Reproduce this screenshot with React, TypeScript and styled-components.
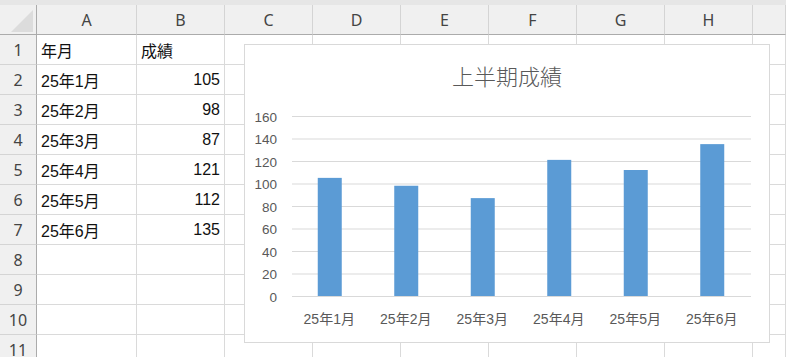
import React from 'react'
import styled, { createGlobalStyle } from 'styled-components'

const GlobalStyle = createGlobalStyle`
  html, body {
    margin: 0;
    padding: 0;
    background: #fff;
    overflow: hidden;
  }
  body {
    font-family: "Liberation Sans", "Noto Sans CJK JP", sans-serif;
  }
`

// the last column is cut off by the window, its letter isn't visible
const COLUMNS = ['A', 'B', 'C', 'D', 'E', 'F', 'G', 'H', '']
const ROW_COUNT = 11

const data: [string, number][] = [
  ['25年1月', 105],
  ['25年2月', 98],
  ['25年3月', 87],
  ['25年4月', 121],
  ['25年5月', 112],
  ['25年6月', 135],
]

const Workbook = styled.div`
  position: relative;
  width: 786px;
  height: 357px;
  overflow: hidden;
  background: #fff;
`

const TopStrip = styled.div`
  height: 5px;
  background: #e6e6e6;
`

const Grid = styled.div`
  display: grid;
  grid-template-columns: 37px 100px repeat(7, 88px) 1fr;
  grid-auto-rows: 30px;
`

const Corner = styled.div`
  box-sizing: border-box;
  background: #f0f0f0;
  border-right: 1px solid #ababab;
  border-bottom: 1px solid #ababab;
  display: flex;
  justify-content: flex-end;
  align-items: flex-end;
  padding: 0 3px 2px 0;
`

const CornerTriangle = styled.div`
  width: 22px;
  height: 22px;
  background: #dcdcdc;
  clip-path: polygon(100% 0, 100% 100%, 0 100%);
`

const ColHeader = styled.div`
  box-sizing: border-box;
  background: #f0f0f0;
  border-right: 1px solid #d4d4d4;
  border-bottom: 1px solid #ababab;
  display: flex;
  align-items: center;
  justify-content: center;
  font-family: "Noto Sans", "Liberation Sans", sans-serif;
  font-size: 16px;
  color: #444;
`

const RowHeader = styled.div`
  box-sizing: border-box;
  background: #f0f0f0;
  border-right: 1px solid #ababab;
  border-bottom: 1px solid #d4d4d4;
  display: flex;
  align-items: center;
  justify-content: center;
  font-family: "Noto Sans", "Liberation Sans", sans-serif;
  font-size: 16px;
  color: #444;
`

const Cell = styled.div<{ $align?: 'left' | 'right' }>`
  box-sizing: border-box;
  border-right: 1px solid #dadada;
  border-bottom: 1px solid #dadada;
  display: flex;
  align-items: center;
  justify-content: ${p => (p.$align === 'right' ? 'flex-end' : 'flex-start')};
  padding: 0 4px;
  font-size: 16px;
  color: #111;
  white-space: nowrap;
`

const Chart = styled.div`
  position: absolute;
  left: 244px;
  top: 44px;
  width: 526px;
  height: 299px;
  box-sizing: border-box;
  border: 1px solid #d9d9d9;
  background: #fff;
  display: flex;
  flex-direction: column;
`

const ChartTitle = styled.div`
  height: 42px;
  box-sizing: border-box;
  padding-top: 18px;
  line-height: 24px;
  text-align: center;
  font-family: "Noto Sans CJK JP", sans-serif;
  font-size: 22px;
  font-weight: 300;
  color: #595959;
`

const PlotSvg = styled.svg`
  display: block;
  width: 524px;
  height: 255px;
`

const AxisText = styled.text<{ $size: number }>`
  font-family: "Liberation Sans", "Noto Sans CJK JP", sans-serif;
  font-size: ${p => p.$size}px;
  fill: #595959;
`

function cellValue(row: number, col: number) {
  if (row === 1) {
    if (col === 0) return { text: '年月', align: 'left' as const }
    if (col === 1) return { text: '成績', align: 'left' as const }
    return null
  }
  const entry = data[row - 2]
  if (!entry) return null
  if (col === 0) return { text: entry[0], align: 'left' as const }
  if (col === 1) return { text: String(entry[1]), align: 'right' as const }
  return null
}

const PLOT_LEFT = 47
const PLOT_RIGHT = 506
const PLOT_BOTTOM = 209
const UNIT = 22.5 / 20
const TICKS = [0, 20, 40, 60, 80, 100, 120, 140, 160]

function ColumnChart() {
  const slot = (PLOT_RIGHT - PLOT_LEFT) / data.length
  return (
    <PlotSvg viewBox="0 0 524 255">
      {TICKS.map(t => {
        const y = PLOT_BOTTOM - t * UNIT
        return (
          <g key={t}>
            <line x1={PLOT_LEFT} x2={PLOT_RIGHT} y1={y + 0.5} y2={y + 0.5} stroke="#d9d9d9" strokeWidth={1} />
            <AxisText $size={13.5} x={32} y={y + 1} textAnchor="end" dominantBaseline="central">
              {t}
            </AxisText>
          </g>
        )
      })}
      {data.map(([label, value], i) => {
        const cx = PLOT_LEFT + slot * (i + 0.5)
        const h = value * UNIT
        return (
          <g key={label}>
            <rect x={cx - 12.5} y={PLOT_BOTTOM - h} width={24} height={h} fill="#5b9bd5" />
            <AxisText $size={14} x={cx - 1} y={232} textAnchor="middle" dominantBaseline="central">
              {label}
            </AxisText>
          </g>
        )
      })}
    </PlotSvg>
  )
}

export default function App() {
  return (
    <Workbook>
      <GlobalStyle />
      <TopStrip />
      <Grid>
        <Corner>
          <CornerTriangle />
        </Corner>
        {COLUMNS.map((c, ci) => (
          <ColHeader key={ci}>{c}</ColHeader>
        ))}
        {Array.from({ length: ROW_COUNT }, (_, r) => (
          <React.Fragment key={r}>
            <RowHeader>{r + 1}</RowHeader>
            {COLUMNS.map((_, ci) => {
              const v = cellValue(r + 1, ci)
              return (
                <Cell key={ci} $align={v?.align}>
                  {v?.text}
                </Cell>
              )
            })}
          </React.Fragment>
        ))}
      </Grid>
      <Chart>
        <ChartTitle>上半期成績</ChartTitle>
        <ColumnChart />
      </Chart>
    </Workbook>
  )
}
